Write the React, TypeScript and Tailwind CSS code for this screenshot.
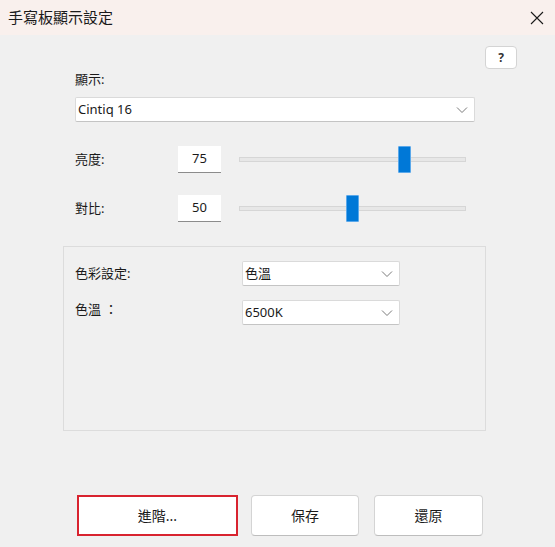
import { useState } from "react";

const font = "font-['Noto_Sans','Noto_Sans_CJK_TC',sans-serif]";

const Chevron = () => (
  <svg width="12" height="8" viewBox="0 0 12 8" className="shrink-0">
    <path d="M1 1.5 L6 6.5 L11 1.5" fill="none" stroke="#7a7a7a" strokeWidth="1" />
  </svg>
);

const Select = ({ value, width }: { value: string; width: string }) => (
  <div
    className={`${width} h-[25px] bg-white border border-[#dadada] border-b-[#c4c4c4] rounded-[2px] flex items-center justify-between pl-[2px] pr-[6px] text-[13px] text-[#1a1a1a]`}
  >
    <span>{value}</span>
    <Chevron />
  </div>
);

const SliderRow = ({ label, value }: { label: string; value: number }) => (
  <div className="flex items-center h-[27px]">
    <span className="w-[103px] text-[13px]">{label}</span>
    <div className="w-[43px] h-[27px] bg-white border-b border-[#8c8c8c] flex items-center justify-center text-[13px]">
      {value}
    </div>
    <div className="relative ml-[18px] w-[227px] h-[27px] flex items-center">
      <div className="w-full h-[5px] bg-[#e7e7e7] border border-[#d6d6d6]" />
      <div
        className="absolute top-0 w-[13px] h-[27px] bg-[#0078d7] border border-[#5aa8ea] rounded-[1px]"
        style={{ left: `${Math.round(3 + value * 2.08)}px` }}
      />
    </div>
  </div>
);

export default function App() {
  const [display] = useState("Cintiq 16");

  return (
    <div className={`${font} w-[555px] h-[547px] bg-[#f0f0f0] flex flex-col text-[#1a1a1a]`}>
      {/* title bar */}
      <div className="h-[35px] bg-[#f9f0ed] flex items-center justify-between pl-[8px] pr-[11px]">
        <span className="text-[15px] text-[#1a1a1a]">手寫板顯示設定</span>
        <svg width="14" height="14" viewBox="0 0 14 14">
          <path d="M1 1 L13 13 M13 1 L1 13" stroke="#1a1a1a" strokeWidth="1.1" />
        </svg>
      </div>

      <div className="flex justify-end pr-[38px] mt-[11px]">
        <button className="w-[32px] h-[23px] bg-white border border-[#d4d4d4] rounded-[4px] text-[12px] font-bold text-[#333] leading-none">
          ?
        </button>
      </div>

      <div className="ml-[63px] w-[423px] flex flex-col">
        <div className="pl-[12px]">
          <div className="mt-[1px] h-[18px] text-[13px] leading-[18px]">顯示:</div>
          <div className="mt-[9px]">
            <Select value={display} width="w-[400px]" />
          </div>
          <div className="mt-[24px] flex flex-col gap-[22px]">
            <SliderRow label="亮度:" value={75} />
            <SliderRow label="對比:" value={50} />
          </div>
        </div>

        <div className="mt-[24px] h-[185px] border border-[#dcdcdc] px-[11px] pt-[14px] flex flex-col gap-[14px]">
          <div className="flex items-center">
            <span className="w-[167px] text-[13px]">色彩設定:</span>
            <Select value="色溫" width="w-[158px]" />
          </div>
          <div className="flex items-start">
            <span className="w-[167px] text-[13px] leading-[18px]">色溫 ：</span>
            <Select value="6500K" width="w-[158px]" />
          </div>
        </div>
      </div>

      <div className="mt-[64px] ml-[77px] flex gap-[13px] text-[14px]">
        <button className="w-[161px] h-[41px] bg-white border-2 border-[#d8232f]">進階...</button>
        <button className="w-[108px] h-[41px] bg-white border border-[#d4d4d4] border-b-[#bdbdbd] rounded-[4px]">
          保存
        </button>
        <button className="ml-[2px] w-[109px] h-[41px] bg-white border border-[#d4d4d4] border-b-[#bdbdbd] rounded-[4px]">
          還原
        </button>
      </div>
    </div>
  );
}
